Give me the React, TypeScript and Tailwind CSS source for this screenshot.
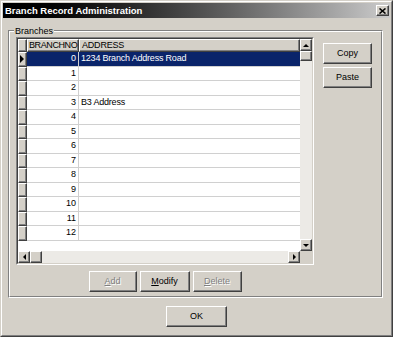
import React from 'react';

const rows: { no: number; address: string }[] = [
  { no: 0, address: '1234 Branch Address Road' },
  { no: 1, address: '' },
  { no: 2, address: '' },
  { no: 3, address: 'B3 Address' },
  { no: 4, address: '' },
  { no: 5, address: '' },
  { no: 6, address: '' },
  { no: 7, address: '' },
  { no: 8, address: '' },
  { no: 9, address: '' },
  { no: 10, address: '' },
  { no: 11, address: '' },
  { no: 12, address: '' },
];

// classic raised 3D edge
const raised =
  'bg-[#d4d0c8] border border-t-white border-l-white border-r-[#404040] border-b-[#404040] shadow-[inset_-1px_-1px_0_#808080]';

function Button({
  children,
  width,
  disabled,
}: {
  children: React.ReactNode;
  width: string;
  disabled?: boolean;
}) {
  return (
    <div
      className={`${raised} ${width} h-[21px] flex items-center justify-center text-[9px] ${
        disabled ? 'text-[#808080] [text-shadow:1px_1px_0_#fff]' : 'text-black'
      }`}
    >
      {children}
    </div>
  );
}

function ArrowButton({ dir, className = '' }: { dir: 'up' | 'down' | 'left' | 'right'; className?: string }) {
  const tri = {
    up: 'border-x-[3px] border-x-transparent border-b-[3px] border-b-black',
    down: 'border-x-[3px] border-x-transparent border-t-[3px] border-t-black',
    left: 'border-y-[3px] border-y-transparent border-r-[3px] border-r-black',
    right: 'border-y-[3px] border-y-transparent border-l-[3px] border-l-black',
  }[dir];
  return (
    <div className={`${raised} w-[12px] h-[12px] shrink-0 flex items-center justify-center ${className}`}>
      <div className={`w-0 h-0 ${tri}`} />
    </div>
  );
}

function Grid() {
  return (
    <div className="w-[298px] h-[228px] border border-t-[#808080] border-l-[#808080] border-r-white border-b-white shrink-0">
      <div className="h-full border border-t-[#404040] border-l-[#404040] border-r-[#d4d0c8] border-b-[#d4d0c8] flex flex-col bg-white">
        <div className="flex flex-1 min-h-0">
          {/* data area */}
          <div className="flex-1 flex flex-col">
            <div className="flex h-[13px]">
              <div className={`${raised} w-[9px] shrink-0`} />
              <div className={`${raised} w-[52px] shrink-0 pl-[1px] leading-[11px] tracking-[-0.4px] whitespace-nowrap overflow-hidden`}>
                BRANCHNO
              </div>
              <div className={`${raised} flex-1 pl-[2px] leading-[11px] tracking-[-0.2px]`}>ADDRESS</div>
            </div>
            {rows.map((r, i) => {
              const sel = i === 0;
              return (
                <div key={r.no} className="flex h-[14.5px]">
                  <div className={`${raised} w-[9px] shrink-0 flex items-center pl-[1px]`}>
                    {sel && <div className="w-0 h-0 border-y-[4px] border-y-transparent border-l-[4px] border-l-black" />}
                  </div>
                  <div
                    className={`w-[52px] shrink-0 border-r border-b border-[#d0d0d0] flex items-center justify-end pr-[2px] ${
                      sel ? 'bg-[#0a246a] text-white' : 'text-black'
                    }`}
                  >
                    {r.no}
                  </div>
                  <div
                    className={`flex-1 border-b border-[#d0d0d0] flex items-center pl-[2px] tracking-[-0.2px] ${
                      sel ? 'bg-[#0a246a] text-white' : 'text-black'
                    }`}
                  >
                    {r.address}
                  </div>
                </div>
              );
            })}
          </div>
          {/* vertical scrollbar */}
          <div className="w-[12px] flex flex-col bg-[#eceae6]">
            <ArrowButton dir="up" />
            <div className={`${raised} h-[10px] shrink-0`} />
            <div className="flex-1" />
            <ArrowButton dir="down" />
          </div>
        </div>
        {/* horizontal scrollbar */}
        <div className="flex h-[12px] shrink-0">
          <div className="flex-1 flex bg-[#eceae6]">
            <ArrowButton dir="left" />
            <div className={`${raised} w-[12px] shrink-0`} />
            <div className="flex-1" />
            <ArrowButton dir="right" />
          </div>
          <div className="w-[12px] bg-[#d4d0c8]" />
        </div>
      </div>
    </div>
  );
}

export default function App() {
  return (
    <div className="w-[393px] h-[337px] bg-[#d4d0c8] border border-t-[#d4d0c8] border-l-[#d4d0c8] border-r-[#404040] border-b-[#404040] font-['Liberation_Sans',Arial,sans-serif] text-[9px] text-black overflow-hidden">
      <div className="h-full border border-t-white border-l-white border-r-[#808080] border-b-[#808080] p-[1px] flex flex-col">
        {/* title bar */}
        <div className="h-[15px] shrink-0 flex items-center bg-linear-to-r from-black to-[#cccccc] pl-[2px] pr-[1px]">
          <span className="flex-1 text-white font-bold text-[9.5px] leading-none">Branch Record Administration</span>
          <div className={`${raised} w-[13px] h-[11px] flex items-center justify-center`}>
            <svg width="7" height="6" viewBox="0 0 7 6">
              <path d="M0.5 0.5 L6.5 5.5 M6.5 0.5 L0.5 5.5" stroke="black" strokeWidth="1.6" />
            </svg>
          </div>
        </div>

        {/* group box */}
        <div className="relative mt-[12px] ml-[5px] mr-[7px] h-[268px] shrink-0 border border-t-[#808080] border-l-[#808080] border-r-white border-b-white">
          <span className="absolute left-[5px] -top-[5px] px-[1px] bg-[#d4d0c8] leading-[10px]">Branches</span>
          <div className="h-full border border-t-white border-l-white border-r-[#808080] border-b-[#808080] pl-[6px] pt-[5px] flex flex-col">
            <div className="flex">
              <Grid />
              <div className="ml-[9px] mt-[6px] flex flex-col gap-[3px]">
                <Button width="w-[49px]">Copy</Button>
                <Button width="w-[49px]">Paste</Button>
              </div>
            </div>
            <div className="w-[298px] flex justify-center gap-[3px] mt-[6px]">
              <Button width="w-[48px]" disabled>
                <span className="underline">A</span>dd
              </Button>
              <Button width="w-[50px]">
                <span className="underline">M</span>odify
              </Button>
              <Button width="w-[49px]" disabled>
                <span className="underline">D</span>elete
              </Button>
            </div>
          </div>
        </div>

        {/* OK */}
        <div className="flex justify-center mt-[8px]">
          <Button width="w-[61px]">OK</Button>
        </div>
      </div>
    </div>
  );
}
